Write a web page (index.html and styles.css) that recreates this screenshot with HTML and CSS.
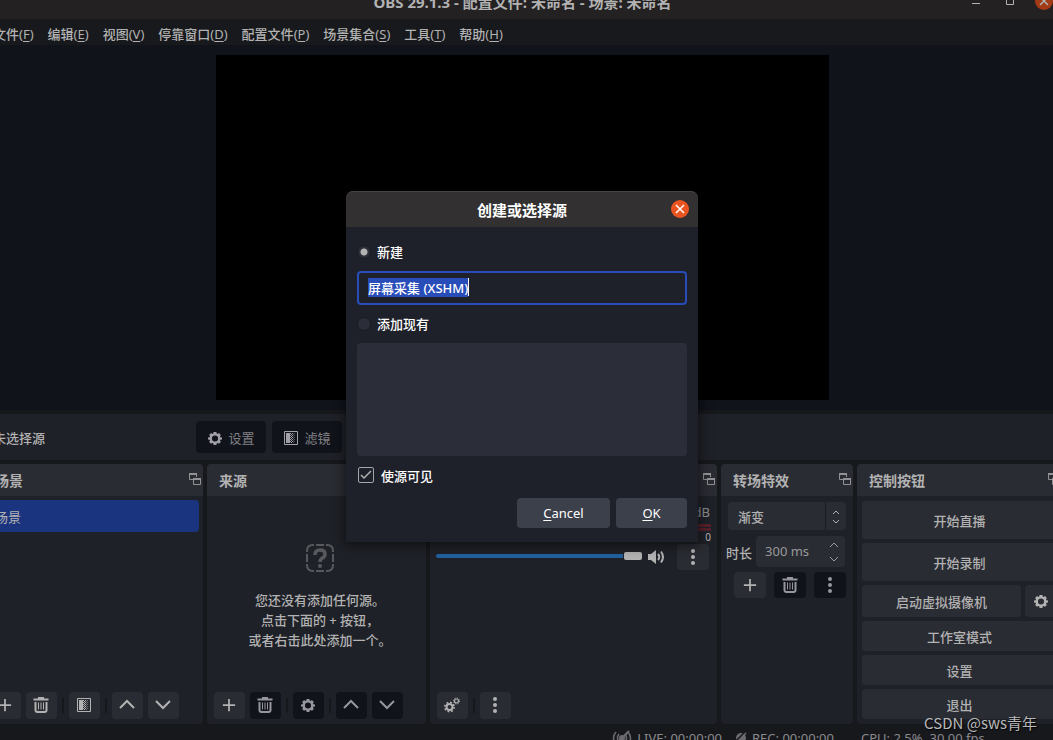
FILE: index.html
```html
<!DOCTYPE html>
<html lang="zh-CN">
<head>
<meta charset="utf-8">
<title>OBS 29.1.3</title>
<link rel="stylesheet" href="styles.css">
</head>
<body>
<svg class="defs" aria-hidden="true">
  <symbol id="gear" viewBox="0 0 16 16"><path fill="currentColor" fill-rule="evenodd" d="M6.4 1h3.2l.4 1.9.9.4 1.6-1 2.2 2.2-1 1.6.4.9 1.9.4v2.2l-1.9.4-.4.9 1 1.6-2.2 2.2-1.6-1-.9.4-.4 1.9H6.4L6 14.1l-.9-.4-1.6 1-2.2-2.2 1-1.6-.4-.9L0 9.6V7.4L1.900 7l.4-.9-1-1.600 2.200-2.200 1.600 1 .9-.4zM8 5a3.500 3.500 0 1 0 0 7 3.500 3.500 0 0 0 0-7z"/></symbol>
  <symbol id="plus" viewBox="0 0 16 16"><path stroke="currentColor" stroke-width="2" d="M8 1v14M1 8h14"/></symbol>
  <symbol id="trash" viewBox="0 0 16 16"><path fill="none" stroke="currentColor" stroke-width="2" d="M0.500 2.500h15M2.500 5v8q0 2 2 2h7q2 0 2-2V5"/><path stroke="currentColor" stroke-width="1" d="M5.500 5.500v7M8 5.500v7M10.500 5.500v7"/><path fill="currentColor" d="M5 0h6v2H5z"/></symbol>
  <symbol id="filter" viewBox="0 0 14 14"><path fill="none" stroke="currentColor" d="M.5.500h13v13H.5z"/><path fill="currentColor" d="M2 2h4v10H2z"/><path stroke="currentColor" stroke-dasharray="1 1" d="M6.500 2v10M8.500 2v10M7.500 3v9"/><path stroke="currentColor" stroke-opacity=".45" stroke-dasharray="1 1" d="M9.500 3v9M10.500 2v10"/></symbol>
  <symbol id="up" viewBox="0 0 16 16"><path fill="none" stroke="currentColor" stroke-width="2" d="M1 11l7-7 7 7"/></symbol>
  <symbol id="down" viewBox="0 0 16 16"><path fill="none" stroke="currentColor" stroke-width="2" d="M1 4l7 7 7-7"/></symbol>
  <symbol id="dots" viewBox="0 0 16 16"><circle cx="8" cy="2" r="2" fill="currentColor"/><circle cx="8" cy="8" r="2" fill="currentColor"/><circle cx="8" cy="14" r="2" fill="currentColor"/></symbol>
  <symbol id="float" viewBox="0 0 12 12"><path fill="none" stroke="currentColor" d="M4 6.500H.5v-6h7V4M4.500 5.500h7v6h-7z"/><path fill="currentColor" d="M0 0h8v2H0zM4 5h8v2H4z"/></symbol>
  <symbol id="updown" viewBox="0 0 8 14"><path fill="none" stroke="currentColor" d="M1 4l3-3 3 3M1 10l3 3 3-3"/></symbol>
  <symbol id="spin" viewBox="0 0 10 20"><path fill="none" stroke="currentColor" d="M1 5l4-4 4 4M1 15l4 4 4-4"/></symbol>
  <symbol id="cross" viewBox="0 0 18 18"><path stroke="currentColor" stroke-width="1.500" d="M5 5l8 8M13 5l-8 8"/></symbol>
</svg>
<div class="app">
  <header class="titlebar">
    <h1 class="title">OBS 29.1.3 - 配置文件: 未命名 - 场景: 未命名</h1>
    <div class="winbtns">
      <button class="winbtn" aria-label="最小化"><svg width="10" height="10"><path stroke="currentColor" d="M1 7.500h8"/></svg></button>
      <button class="winbtn" aria-label="最大化"><svg width="10" height="10"><path fill="none" stroke="currentColor" d="M1.500 1.500h7v7h-7z"/></svg></button>
      <button class="close dim" aria-label="关闭"><svg width="18" height="18"><use href="#cross"/></svg></button>
    </div>
  </header>
  <nav class="menu">
    <button>文件<span>(<u>F</u>)</span></button><button>编辑<span>(<u>E</u>)</span></button><button>视图<span>(<u>V</u>)</span></button><button>停靠窗口<span>(<u>D</u>)</span></button><button>配置文件<span>(<u>P</u>)</span></button><button>场景集合<span>(<u>S</u>)</span></button><button>工具<span>(<u>T</u>)</span></button><button>帮助<span>(<u>H</u>)</span></button>
  </nav>
  <main class="preview"><div class="canvas"></div></main>
  <section class="context">
    <span class="context-name">未选择源</span>
    <button class="ctx-btn"><svg width="14" height="14"><use href="#gear"/></svg>设置</button>
    <button class="ctx-btn"><svg width="14" height="14"><use href="#filter"/></svg>滤镜</button>
  </section>
  <div class="docks">
    <section class="dock">
      <header class="dock-head"><h2>场景</h2><button class="float" aria-label="浮动"><svg width="12" height="12"><use href="#float"/></svg></button></header>
      <ul class="scenes"><li>场景</li></ul>
      <footer class="tools">
        <button class="tool" aria-label="添加"><svg width="14" height="14"><use href="#plus"/></svg></button>
        <button class="tool" aria-label="删除"><svg width="16" height="16"><use href="#trash"/></svg></button>
        <i class="sep"></i>
        <button class="tool" aria-label="滤镜"><svg width="14" height="14"><use href="#filter"/></svg></button>
        <i class="sep"></i>
        <button class="tool" aria-label="上移"><svg width="16" height="16"><use href="#up"/></svg></button>
        <button class="tool" aria-label="下移"><svg width="16" height="16"><use href="#down"/></svg></button>
      </footer>
    </section>
    <section class="dock">
      <header class="dock-head"><h2>来源</h2><button class="float" aria-label="浮动"><svg width="12" height="12"><use href="#float"/></svg></button></header>
      <div class="empty">
        <svg width="28" height="28" viewBox="0 0 28 28"><path fill="none" stroke="currentColor" stroke-width="2" d="M1 8V7q0-6 6-6h1M20 1h1q6 0 6 6v1M27 20v1q0 6-6 6h-1M8 27H7q-6 0-6-6v-1M10 1h8M10 27h8M1 10v8M27 10v8"/><path fill="none" stroke="currentColor" stroke-width="3.500" d="M9 11q0-5 5-5t5 4q0 2.500-2.500 4T14 18"/><circle cx="14" cy="22" r="2" fill="currentColor"/></svg>
        <p>您还没有添加任何源。<br>点击下面的 + 按钮，<br>或者右击此处添加一个。</p>
      </div>
      <footer class="tools">
        <button class="tool" aria-label="添加"><svg width="14" height="14"><use href="#plus"/></svg></button>
        <button class="tool off" aria-label="删除"><svg width="16" height="16"><use href="#trash"/></svg></button>
        <i class="sep"></i>
        <button class="tool off" aria-label="属性"><svg width="14" height="14"><use href="#gear"/></svg></button>
        <i class="sep"></i>
        <button class="tool off" aria-label="上移"><svg width="16" height="16"><use href="#up"/></svg></button>
        <button class="tool off" aria-label="下移"><svg width="16" height="16"><use href="#down"/></svg></button>
      </footer>
    </section>
    <section class="dock">
      <header class="dock-head"><h2>混音器</h2><button class="float" aria-label="浮动"><svg width="12" height="12"><use href="#float"/></svg></button></header>
      <div class="mixer">
        <div class="db">0.0 dB</div>
        <div class="meter"></div>
        <div class="meter"></div>
        <div class="scale">0</div>
        <div class="volume">
          <input type="range" min="0" max="100" value="100" aria-label="音量">
          <svg width="18" height="16" viewBox="0 0 18 16"><path fill="currentColor" d="M0 5h3l5-4v14l-5-4H0z"/><path fill="none" stroke="currentColor" stroke-width="2" d="M10 5q2.500 3 0 6M13 2.500q4 5.500 0 11"/></svg>
          <button class="tool wide" aria-label="更多"><svg width="16" height="16"><use href="#dots"/></svg></button>
        </div>
      </div>
      <footer class="tools">
        <button class="tool" aria-label="高级音频属性"><svg width="16" height="16" viewBox="0 0 16 16"><circle cx="5.500" cy="10" r="3" fill="none" stroke="currentColor" stroke-width="2"/><circle cx="5.500" cy="10" r="4.700" fill="none" stroke="currentColor" stroke-width="1.600" stroke-dasharray="1.850 1.840"/><circle cx="12.500" cy="4" r="2" fill="none" stroke="currentColor" stroke-width="1.200"/><circle cx="12.500" cy="4" r="3" fill="none" stroke="currentColor" stroke-width="1" stroke-dasharray="1.180 1.180"/></svg></button>
        <i class="sep"></i>
        <button class="tool" aria-label="更多"><svg width="16" height="16"><use href="#dots"/></svg></button>
      </footer>
    </section>
    <section class="dock">
      <header class="dock-head"><h2>转场特效</h2><button class="float" aria-label="浮动"><svg width="12" height="12"><use href="#float"/></svg></button></header>
      <div class="trans">
        <div class="combo"><select aria-label="转场特效"><option>渐变</option></select><svg width="8" height="14"><use href="#updown"/></svg></div>
        <div class="duration"><label for="dur">时长</label><div class="spinbox"><input id="dur" type="text" value="300 ms"><svg width="10" height="20"><use href="#spin"/></svg></div></div>
        <div class="trans-tools">
          <button class="tool wide" aria-label="添加"><svg width="14" height="14"><use href="#plus"/></svg></button>
          <button class="tool wide off" aria-label="删除"><svg width="16" height="16"><use href="#trash"/></svg></button>
          <button class="tool wide off" aria-label="更多"><svg width="16" height="16"><use href="#dots"/></svg></button>
        </div>
      </div>
    </section>
    <section class="dock">
      <header class="dock-head"><h2>控制按钮</h2><button class="float" aria-label="浮动"><svg width="12" height="12"><use href="#float"/></svg></button></header>
      <div class="controls">
        <button class="ctl tall">开始直播</button>
        <button class="ctl tall">开始录制</button>
        <div class="vcam"><button class="ctl mid">启动虚拟摄像机</button><button class="ctl mid gearbtn" aria-label="配置"><svg width="14" height="14"><use href="#gear"/></svg></button></div>
        <button class="ctl">工作室模式</button>
        <button class="ctl">设置</button>
        <button class="ctl">退出</button>
      </div>
    </section>
  </div>
  <footer class="status">
    <span class="stat"><svg width="20" height="16" viewBox="0 0 20 16"><path fill="none" stroke="currentColor" stroke-width="1.500" d="M4 2q-5 6 0 12M7 4q-3 4 0 8M16 2q5 6 0 12M13 4q3 4 0 8"/><circle cx="10" cy="8" r="3" fill="currentColor"/><path stroke="currentColor" stroke-width="2" d="M3 15L17 1"/></svg>LIVE: 00:00:00</span>
    <span class="stat"><svg width="12" height="14" viewBox="0 0 12 14"><circle cx="6" cy="7" r="5" fill="currentColor"/><path stroke="#17181c" stroke-width="1.500" d="M0 11L10 1"/><path stroke="currentColor" stroke-width="1.500" d="M1 13L11 2"/></svg>REC: 00:00:00</span>
    <span class="stat cpu">CPU: 2.5%, 30.00 fps</span>
  </footer>
  <div class="layer">
    <form class="dialog" role="dialog" aria-labelledby="dlg">
      <header class="dlg-head"><h2 id="dlg">创建或选择源</h2><button type="button" class="close" aria-label="关闭"><svg width="18" height="18"><use href="#cross"/></svg></button></header>
      <div class="dlg-body">
        <label class="opt"><input type="radio" name="mode" checked>新建</label>
        <div class="namebox"><input id="name" class="name" type="text" value="屏幕采集 (XSHM)" aria-label="名称"><i class="caret"></i></div>
        <label class="opt"><input type="radio" name="mode">添加现有</label>
        <div class="list" role="listbox" aria-label="现有源"></div>
        <label class="opt visible"><input type="checkbox" checked>使源可见</label>
        <div class="actions"><button type="button" class="act cancel"><span><u>C</u>ancel</span></button><button type="button" class="act"><span><u>O</u>K</span></button></div>
      </div>
    </form>
  </div>
</div>
<div class="watermark">CSDN @sws青年</div>
<script src="app.js"></script>
</body>
</html>
```

FILE: styles.css
```css
* { box-sizing: border-box; margin: 0; }
html, body { height: 100%; overflow: hidden; }
body {
  position: relative;
  background: #17181c;
  color: #b2b2b2;
  font: 13px/20px "Noto Sans", "Noto Sans CJK SC", sans-serif;
}
button, input, select { font: inherit; color: inherit; border: 0; padding: 0; background: none; }
svg { flex: none; display: block; }
.defs { position: absolute; width: 0; height: 0; }

/* the window runs past every edge of the viewport */
.app {
  position: relative;
  display: flex;
  flex-direction: column;
  height: calc(100vh + 29px);
  margin: -17px -9px 0 -17px;
}

.titlebar {
  display: grid;
  grid-template-columns: 1fr auto 1fr;
  align-items: center;
  height: 36px;
  background: #242122;
}
.title { grid-column: 2; padding-top: 2px; font-size: 15px; line-height: 24px; }
.winbtns { display: flex; align-items: center; justify-content: flex-end; gap: 24px; padding-right: 9px; }
.winbtn { width: 10px; height: 10px; }
.close { width: 18px; height: 18px; border-radius: 50%; background: #e95420; color: #fff; }
.close.dim { background: #a33a16; color: #b2b2b2; margin-left: -4px; }

.menu { display: flex; height: 26px; padding-left: 3px; background: #17191c; }
.menu button { padding: 3px 7px 0; font-weight: 500; white-space: nowrap; }
.menu span { font-weight: 400; }
u { text-underline-offset: 2px; }

.preview { flex: 1; min-height: 0; display: flex; justify-content: center; padding: 10px; background: #10131a; }
.canvas { height: 100%; aspect-ratio: 16 / 9; background: #000; }

.context {
  display: flex;
  align-items: center;
  gap: 6px;
  height: 46px;
  margin: 4px 0;
  padding-left: 10px;
  background: #1f2128;
}
.context-name { width: 197px; padding-top: 2px; font-weight: 500; }
.ctx-btn {
  display: flex;
  align-items: center;
  justify-content: center;
  gap: 6px;
  width: 70px;
  height: 32px;
  padding: 1px 0 0 1px;
  border-radius: 4px;
  background: #10131a;
  color: #808084;
}
.ctx-btn svg { color: #a0a0a6; }

.docks {
  display: grid;
  grid-template-columns: 220fr 219fr 287fr 132fr 205fr;
  gap: 4px;
  height: 260px;
}
.dock { display: flex; flex-direction: column; min-width: 0; border-radius: 4px; background: #1f2128; overflow: hidden; }
.dock-head {
  display: flex;
  align-items: center;
  justify-content: space-between;
  height: 32px;
  padding: 0 2px 0 12px;
  background: #2a2c33;
}
.dock-head h2 { padding-top: 2px; font-size: 14px; font-weight: 700; }
.float { width: 12px; height: 12px; margin-bottom: 2px; color: #929294; }

.scenes { flex: 1; list-style: none; padding: 4px; }
.scenes li { height: 32px; padding: 7px 8px; border-radius: 4px; background: #1b347f; }

.tools { display: flex; align-items: center; gap: 5px; padding: 0 7px 5px; }
.tool {
  display: flex;
  align-items: center;
  justify-content: center;
  width: 31px;
  height: 27px;
  padding: 0 1px 1px 0;
  border-radius: 4px;
  background: #2a2c33;
}
.tool.wide { width: 32px; height: 26px; padding: 0; }
.tool.off { background: #10131a; color: #96969e; }
.sep { width: 2px; height: 15px; background: #17181c; }

.empty {
  flex: 1;
  display: flex;
  flex-direction: column;
  align-items: center;
  gap: 18px;
  padding: 48px 0 0 7px;
  color: #58595d;
}
.empty p { text-align: center; font-weight: 500; color: #b2b2b2; }

.mixer { flex: 1; padding: 6px 6px 0; }
.db { height: 20px; padding-right: 1px; text-align: right; color: #8e8e92; }
.meter { height: 3px; margin-top: 1px; background: linear-gradient(90deg, #1d4d25 60%, #4d431d 60% 85%, #57202a 85%); }
.db + .meter { margin-top: 2px; }
.scale { height: 13px; font-size: 10px; line-height: 12px; text-align: right; }
.volume { display: flex; align-items: center; gap: 6px; height: 26px; margin-right: 2px; }
.volume .tool { margin-left: 5px; }
input[type="range"] { flex: 1; min-width: 0; height: 10px; margin-bottom: 2px; appearance: none; }
input[type="range"]::-webkit-slider-runnable-track { height: 4px; border-radius: 2px; background: #20619f; }
input[type="range"]::-webkit-slider-thumb { appearance: none; width: 18px; height: 8px; margin-top: -2px; border-radius: 2px; background: #b2b2b2; box-shadow: 0 0 0 1px #1f2128; }

.trans { display: flex; flex-direction: column; gap: 6px; padding: 6px 7px; }
.combo { position: relative; }
.combo select {
  display: block;
  width: 100%;
  height: 28px;
  padding: 1px 0 0 10px;
  appearance: none;
  border-radius: 4px;
  font-weight: 500;
  background: linear-gradient(90deg, #2a2c33 calc(100% - 21px), #1a1b20 calc(100% - 21px) calc(100% - 20px), #2a2c33 calc(100% - 20px));
}
.combo svg { position: absolute; right: 6px; top: 8px; pointer-events: none; }
.duration { display: flex; align-items: center; gap: 4px; margin-left: -2px; font-weight: 500; }
.duration label { padding-top: 2px; }
.spinbox { position: relative; flex: 1; margin-right: 1px; font-weight: 400; color: #9a9a9c; }
.spinbox input { display: block; width: 100%; height: 31px; padding: 0 0 1px 9px; border-radius: 4px; background: #2a2c33; }
.spinbox svg { position: absolute; right: 6px; top: 6px; }
.trans-tools { display: flex; justify-content: flex-end; gap: 8px; margin-top: -1px; }

.controls { display: flex; flex-direction: column; gap: 4px; padding: 5px; }
.ctl { width: 100%; height: 30px; padding-top: 2px; border-radius: 4px; background: #2a2c33; font-weight: 500; }
.ctl.tall { height: 38px; }
.ctl.mid { height: 32px; }
.vcam { display: flex; gap: 4px; }
.gearbtn { display: flex; align-items: center; justify-content: center; flex: 0 0 32px; padding: 0; }

.status { display: flex; justify-content: flex-end; gap: 13px; height: 28px; align-items: center; padding-bottom: 1px; color: #8a8a8c; }
.stat { display: flex; align-items: center; gap: 5px; white-space: nowrap; }
.stat svg { color: #6c6c70; }
.cpu { width: 201px; margin-left: 14px; }

.layer { position: absolute; inset: 0; display: flex; justify-content: center; align-items: flex-start; padding: 208px 1px 0 0; }
.dialog { width: 352px; border-radius: 7px 7px 0 0; background: #1f212a; color: #fff; box-shadow: 0 2px 12px 2px rgba(0, 0, 0, .5); }
.dlg-head {
  display: grid;
  grid-template-columns: 1fr auto 1fr;
  align-items: center;
  height: 36px;
  padding: 0 9px;
  border-top: 1px solid #454344;
  border-radius: 7px 7px 0 0;
  background: #323031;
}
.dlg-head h2 { grid-column: 2; font-size: 15px; line-height: 24px; }
.dlg-head .close { justify-self: end; margin-bottom: 2px; }
.dlg-body { display: flex; flex-direction: column; padding: 15px 11px 14px; }
.opt { display: flex; align-items: center; gap: 6px; height: 20px; font-weight: 500; }
.opt input { appearance: none; margin: 0; }
.opt input[type="radio"] { width: 14px; height: 14px; border-radius: 50%; border: 1px solid #181a20; background: #2b2d38; }
.opt input[type="radio"]:checked { background: radial-gradient(circle, #b2b2b2 3px, #2b2d38 4px); }
.opt input[type="checkbox"] {
  width: 16px;
  height: 16px;
  margin: 0 0 2px 1px;
  border: 1px solid #a4a5aa;
  border-radius: 2px;
  background: url("data:image/svg+xml,%3Csvg xmlns='http://www.w3.org/2000/svg' viewBox='0 0 14 14'%3E%3Cpath fill='none' stroke='%23b2b2b2' stroke-width='1.500' d='M2 7l3 3 7-7'/%3E%3C/svg%3E");
}
.namebox { position: relative; margin: 9px 0; }
.name { display: block; width: 100%; height: 34px; padding: 0 9px 2px; border: 2px solid #284cb8; border-radius: 4px; font-weight: 500; outline: 0; }
.name::selection { background: #284cb8; color: #fff; }
.caret { position: absolute; left: 111px; top: 7px; width: 1px; height: 18px; background: #fff; }
.list { height: 113px; margin: 9px 0 10px; border-radius: 4px; background: #2b2d38; }
.visible { gap: 7px; }
.actions { display: flex; justify-content: flex-end; gap: 6px; margin-top: 12px; }
.act { width: 71px; height: 30px; border-radius: 4px; background: #3c404b; }
.act.cancel { width: 93px; }

.watermark {
  position: absolute;
  right: 16px;
  bottom: 6px;
  font: 15px/22px "Noto Sans CJK SC", sans-serif;
  color: #b8b8ba;
  text-shadow: 1px 1px 1px #000;
}
```

FILE: app.js
```js
const field = document.getElementById('name');
field.focus();
field.select();
```
